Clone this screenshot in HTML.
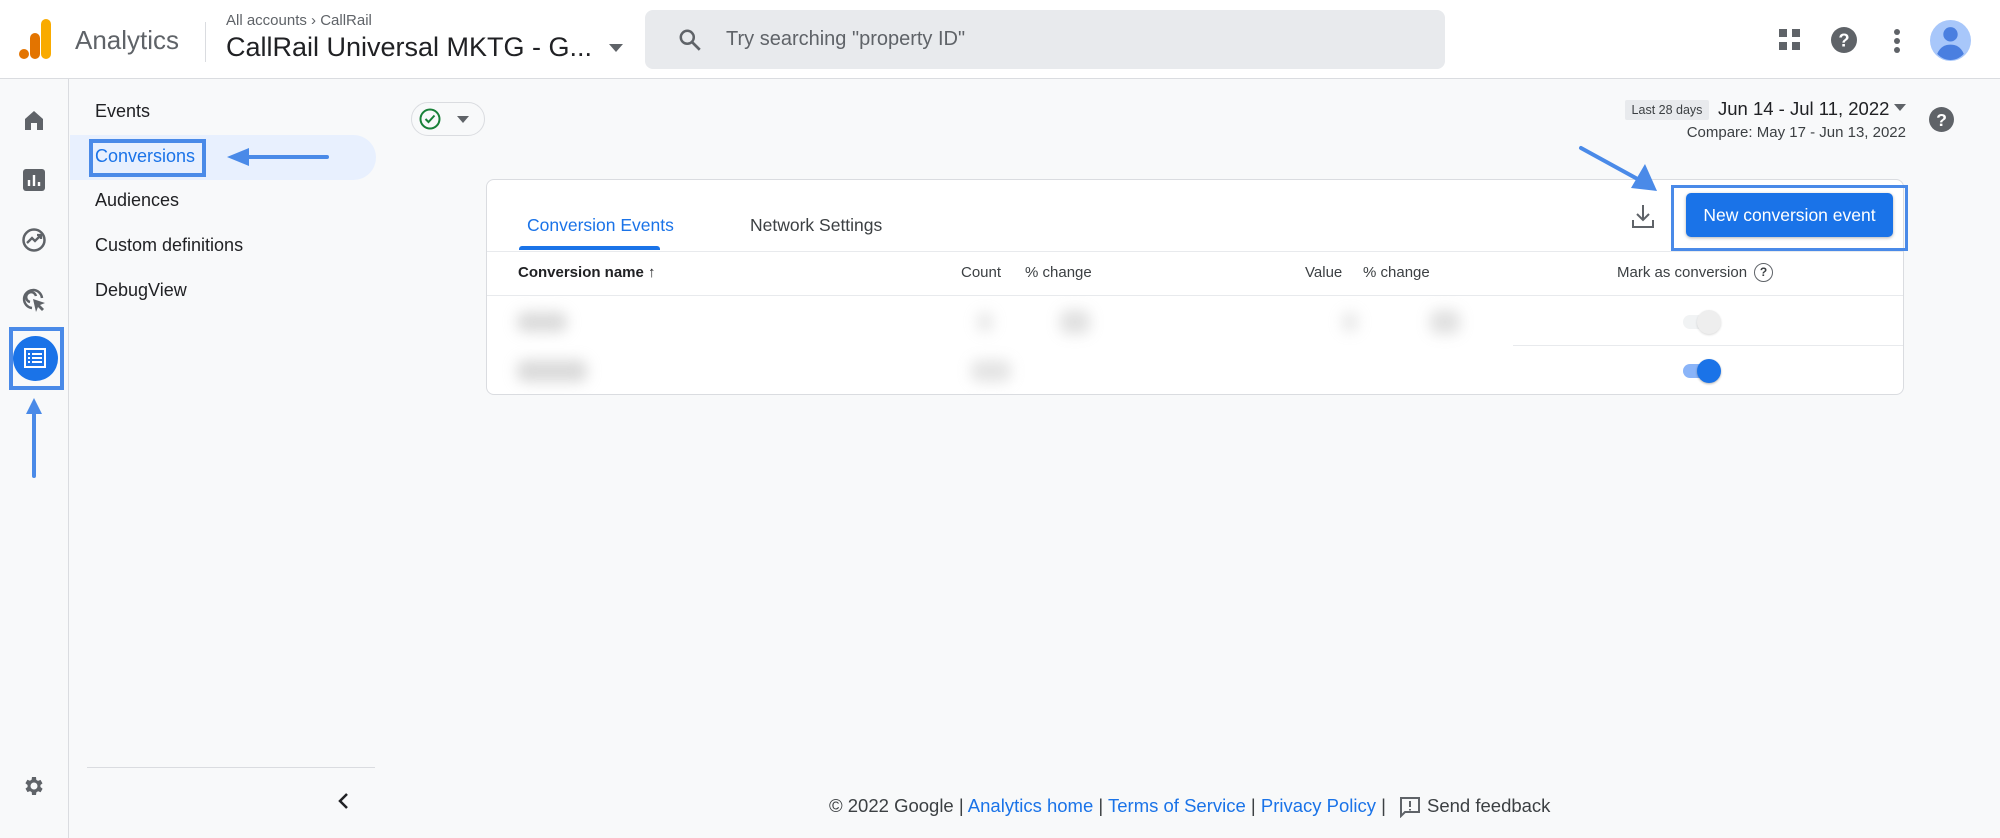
<!DOCTYPE html>
<html><head><meta charset="utf-8">
<style>
*{box-sizing:border-box;margin:0;padding:0}
body{width:2000px;height:838px;position:relative;overflow:hidden;background:#f8f9fa;font-family:"Liberation Sans",Arial,sans-serif;color:#202124}
.a{position:absolute;white-space:nowrap}
.hdr{position:absolute;left:0;top:0;width:2000px;height:79px;background:#fff;border-bottom:1px solid #dadce0}
.rail{position:absolute;left:0;top:79px;width:69px;height:759px;border-right:1px solid #dadce0;background:#f8f9fa}
.nav{font-size:18px;color:#202124}
.card{position:absolute;left:486px;top:179px;width:1418px;height:216px;background:#fff;border:1px solid #dadce0;border-radius:8px;overflow:hidden}
.th{font-size:15px;color:#3c4043}
.blob{position:absolute;background:#bbb;border-radius:8px;filter:blur(7px);opacity:.55}
.hl{position:absolute;border:4px solid #4a8ae8}
</style></head><body>
<div class="hdr"></div>
<svg class="a" style="left:19px;top:19px" width="34" height="40" viewBox="0 0 34 40"><rect x="22" y="0" width="10" height="40" rx="5" fill="#f9ab00"/><rect x="11" y="14" width="10" height="26" rx="5" fill="#e37400"/><circle cx="5" cy="35" r="5" fill="#e37400"/></svg>
<div class="a" style="left:75px;top:25px;font-size:26px;color:#5f6368">Analytics</div>
<div class="a" style="left:205px;top:22px;width:1px;height:40px;background:#dadce0"></div>
<div class="a" style="left:226px;top:12px;font-size:15px;color:#5f6368">All accounts &#8250; CallRail</div>
<div class="a" style="left:226px;top:32px;font-size:27px;color:#202124">CallRail Universal MKTG - G...</div>
<svg class="a" style="left:609px;top:44px" width="14" height="8"><path d="M0 0h14L7 8z" fill="#5f6368"/></svg>
<div class="a" style="left:645px;top:10px;width:800px;height:59px;background:#e8eaed;border-radius:8px"></div>
<svg class="a" style="left:677px;top:27px" width="26" height="26" viewBox="0 0 24 24"><circle cx="9.5" cy="9.5" r="6" fill="none" stroke="#5f6368" stroke-width="2.3"/><path d="M14 14l7 7" stroke="#5f6368" stroke-width="2.5"/></svg>
<div class="a" style="left:726px;top:28px;font-size:20px;color:#5f6368">Try searching "property ID"</div>
<svg class="a" style="left:1779px;top:29px" width="22" height="22"><g fill="#5f6368"><rect x="0" y="0" width="8" height="8"/><rect x="13" y="0" width="8" height="8"/><rect x="0" y="13" width="8" height="8"/><rect x="13" y="13" width="8" height="8"/></g></svg>
<svg class="a" style="left:1831px;top:27px" width="26" height="26" viewBox="0 0 24 24"><circle cx="12" cy="12" r="12" fill="#5f6368"/><text x="12" y="18" font-size="17" font-weight="bold" fill="#fff" text-anchor="middle" font-family="Liberation Sans">?</text></svg>
<svg class="a" style="left:1893px;top:28px" width="8" height="26"><g fill="#5f6368"><circle cx="4" cy="4" r="3"/><circle cx="4" cy="13" r="3"/><circle cx="4" cy="22" r="3"/></g></svg>
<svg class="a" style="left:1930px;top:20px" width="41" height="41" viewBox="0 0 40 40"><circle cx="20" cy="20" r="20" fill="#a8c7fa"/><circle cx="20" cy="14" r="7" fill="#4a7fe0"/><path d="M7 33c3-7 8-9 13-9s10 2 13 9c-4 4-8 6-13 6s-9-2-13-6z" fill="#4a7fe0"/></svg>

<div class="rail"></div>
<svg class="a" style="left:23px;top:109px" width="22" height="22" viewBox="0 0 22 22"><path d="M2 10L11 2l9 8v11h-6v-7H8v7H2z" fill="#5f6368"/></svg>
<svg class="a" style="left:23px;top:169px" width="22" height="22" viewBox="0 0 22 22"><rect width="22" height="22" rx="3" fill="#5f6368"/><path d="M6 11v6M11 6v11M16 13v4" stroke="#fff" stroke-width="2.4"/></svg>
<svg class="a" style="left:21px;top:227px" width="26" height="26" viewBox="0 0 26 26"><circle cx="13" cy="13" r="10.5" fill="none" stroke="#5f6368" stroke-width="2.5"/><path d="M6 16l5-5 3 3 6-6M16 8h4v4" fill="none" stroke="#5f6368" stroke-width="2.3"/></svg>
<svg class="a" style="left:21px;top:287px" width="26" height="26" viewBox="0 0 26 26"><path d="M21 11A9 9 0 1 0 11 21" fill="none" stroke="#5f6368" stroke-width="2.5"/><path d="M15 9a5 5 0 1 0-6 6" fill="none" stroke="#5f6368" stroke-width="2.5"/><path d="M12 12l12 4-5 2 4 4-2 2-4-4-2 5z" fill="#5f6368"/></svg>
<div class="hl" style="left:9px;top:327px;width:55px;height:63px"></div>
<div class="a" style="left:13px;top:336px;width:45px;height:45px;border-radius:50%;background:#1a73e8"></div>
<svg class="a" style="left:24px;top:348px" width="22" height="20" viewBox="0 0 22 20"><rect x="1" y="1" width="20" height="18" fill="none" stroke="#fff" stroke-width="2"/><path d="M4 6h2M8 6h10M4 10h2M8 10h10M4 14h2M8 14h10" stroke="#fff" stroke-width="2"/></svg>
<svg class="a" style="left:24px;top:396px" width="20" height="82"><path d="M10 14v66" stroke="#4a8ae8" stroke-width="4" stroke-linecap="round"/><path d="M2 18L10 2l8 16z" fill="#4a8ae8"/></svg>
<svg class="a" style="left:22px;top:774px" width="24" height="24" viewBox="0 0 24 24"><path fill="#5f6368" d="M19.4 13a7.5 7.5 0 0 0 0-2l2.1-1.6-2-3.5-2.5 1a7 7 0 0 0-1.7-1L15 3h-4l-.4 2.7a7 7 0 0 0-1.7 1l-2.5-1-2 3.5L6.6 11a7.5 7.5 0 0 0 0 2l-2.1 1.6 2 3.5 2.5-1a7 7 0 0 0 1.7 1L11 21h4l.4-2.7a7 7 0 0 0 1.7-1l2.5 1 2-3.5zM13 15.5a3.5 3.5 0 1 1 0-7 3.5 3.5 0 0 1 0 7z" transform="translate(-1 0)"/></svg>

<div class="a" style="left:70px;top:135px;width:306px;height:45px;background:#e8f0fe;border-radius:0 23px 23px 0"></div>
<div class="a nav" style="left:95px;top:101px">Events</div>
<div class="a nav" style="left:95px;top:146px;color:#1a73e8">Conversions</div>
<div class="hl" style="left:89px;top:139px;width:117px;height:38px"></div>
<svg class="a" style="left:225px;top:147px" width="106" height="20"><path d="M20 10h82" stroke="#4a8ae8" stroke-width="4" stroke-linecap="round"/><path d="M2 10L24 1v18z" fill="#4a8ae8"/></svg>
<div class="a nav" style="left:95px;top:190px">Audiences</div>
<div class="a nav" style="left:95px;top:235px">Custom definitions</div>
<div class="a nav" style="left:95px;top:280px">DebugView</div>
<div class="a" style="left:87px;top:767px;width:288px;height:1px;background:#dadce0"></div>
<svg class="a" style="left:337px;top:792px" width="12" height="18"><path d="M10 2L3 9l7 7" fill="none" stroke="#202124" stroke-width="2.5"/></svg>

<div class="a" style="left:411px;top:102px;width:74px;height:34px;border:1px solid #dadce0;border-radius:17px;background:#f8f9fa"></div>
<svg class="a" style="left:419px;top:108px" width="22" height="22" viewBox="0 0 22 22"><circle cx="11" cy="11" r="9.5" fill="none" stroke="#188038" stroke-width="2"/><path d="M6.5 11l3 3 6-6.5" fill="none" stroke="#188038" stroke-width="2"/></svg>
<svg class="a" style="left:457px;top:116px" width="12" height="7"><path d="M0 0h12L6 7z" fill="#5f6368"/></svg>

<div class="a" style="left:1625px;top:100px;width:84px;height:20px;background:#e8eaed;border-radius:2px;font-size:12.5px;color:#3c4043;text-align:center;line-height:20px">Last 28 days</div>
<div class="a" style="left:1718px;top:98px;font-size:18.5px;color:#202124">Jun 14 - Jul 11, 2022</div>
<svg class="a" style="left:1894px;top:104px" width="12" height="7"><path d="M0 0h12L6 7z" fill="#5f6368"/></svg>
<div class="a" style="right:94px;top:124px;font-size:15px;color:#3c4043">Compare: May 17 - Jun 13, 2022</div>
<svg class="a" style="left:1929px;top:107px" width="25" height="25" viewBox="0 0 24 24"><circle cx="12" cy="12" r="12" fill="#5f6368"/><text x="12" y="18" font-size="17" font-weight="bold" fill="#fff" text-anchor="middle" font-family="Liberation Sans">?</text></svg>

<div class="card">
 <div class="a" style="left:0;top:71px;width:1418px;height:1px;background:#e8eaed"></div>
 <div class="a" style="left:40px;top:35px;font-size:17.5px;color:#1a73e8">Conversion Events</div>
 <div class="a" style="left:32px;top:66px;width:141px;height:4px;background:#1a73e8;border-radius:3px 3px 0 0"></div>
 <div class="a" style="left:263px;top:35px;font-size:17.5px;color:#3c4043">Network Settings</div>
 <div class="a th" style="left:31px;top:84px;font-weight:bold;color:#202124">Conversion name &#8593;</div>
 <div class="a th" style="left:474px;top:84px">Count</div>
 <div class="a th" style="left:538px;top:84px">% change</div>
 <div class="a th" style="left:818px;top:84px">Value</div>
 <div class="a th" style="left:876px;top:84px">% change</div>
 <div class="a th" style="left:1130px;top:84px">Mark as conversion</div>
 <div class="a" style="left:1267px;top:83px;width:19px;height:19px;border:1.5px solid #5f6368;border-radius:50%;font-size:12px;font-weight:bold;text-align:center;line-height:16px;color:#3c4043">?</div>
 <div class="a" style="left:0;top:115px;width:1418px;height:1px;background:#e8eaed"></div>
 <div class="a" style="left:1026px;top:165px;width:392px;height:1px;background:#e8eaed"></div>
 <div class="blob" style="left:30px;top:132px;width:50px;height:20px"></div>
 <div class="blob" style="left:490px;top:132px;width:16px;height:20px;opacity:.35"></div>
 <div class="blob" style="left:573px;top:130px;width:30px;height:24px;opacity:.45"></div>
 <div class="blob" style="left:855px;top:132px;width:16px;height:20px;opacity:.35"></div>
 <div class="blob" style="left:943px;top:130px;width:30px;height:24px;opacity:.45"></div>
 <div class="blob" style="left:30px;top:180px;width:70px;height:22px"></div>
 <div class="blob" style="left:484px;top:180px;width:40px;height:22px;opacity:.4"></div>
 <div class="a" style="left:1196px;top:135px;width:34px;height:14px;border-radius:7px;background:#f1f3f4"></div>
 <div class="a" style="left:1210px;top:130px;width:24px;height:24px;border-radius:50%;background:#eee;box-shadow:0 1px 2px rgba(0,0,0,.15)"></div>
 <div class="a" style="left:1196px;top:184px;width:34px;height:14px;border-radius:7px;background:#8ab4f8"></div>
 <div class="a" style="left:1210px;top:179px;width:24px;height:24px;border-radius:50%;background:#1a73e8;box-shadow:0 1px 2px rgba(0,0,0,.3)"></div>
</div>
<svg class="a" style="left:1631px;top:203px" width="24" height="26" viewBox="0 0 24 26"><path d="M12 2v15M6 11l6 6 6-6" fill="none" stroke="#5f6368" stroke-width="2"/><path d="M2 17v7h20v-7" fill="none" stroke="#5f6368" stroke-width="2"/></svg>
<div class="hl" style="left:1671px;top:185px;width:237px;height:66px;border-width:3px"></div>
<div class="a" style="left:1686px;top:193px;width:207px;height:44px;background:#1a73e8;border-radius:5px;box-shadow:0 1px 3px rgba(0,0,0,.3);color:#fff;font-size:17.5px;text-align:center;line-height:44px">New conversion event</div>
<svg class="a" style="left:1575px;top:142px" width="90" height="54"><path d="M6 6l62 34" stroke="#4a8ae8" stroke-width="4" stroke-linecap="round"/><path d="M82 49L56 46l14-24z" fill="#4a8ae8"/></svg>

<div class="a" style="left:829px;top:795px;font-size:18.5px;color:#3c4043">© 2022 Google | <span style="color:#1a73e8">Analytics home</span> | <span style="color:#1a73e8">Terms of Service</span> | <span style="color:#1a73e8">Privacy Policy</span> |</div>
<div class="a" style="left:1427px;top:795px;font-size:18.5px;color:#3c4043">Send feedback</div>
<svg class="a" style="left:1400px;top:797px" width="20" height="21" viewBox="0 0 20 21"><path d="M1 1h18v14H5l-4 4z" fill="none" stroke="#5f6368" stroke-width="2"/><path d="M10 4v6M10 12v1.5" stroke="#5f6368" stroke-width="2"/></svg>
</body></html>
